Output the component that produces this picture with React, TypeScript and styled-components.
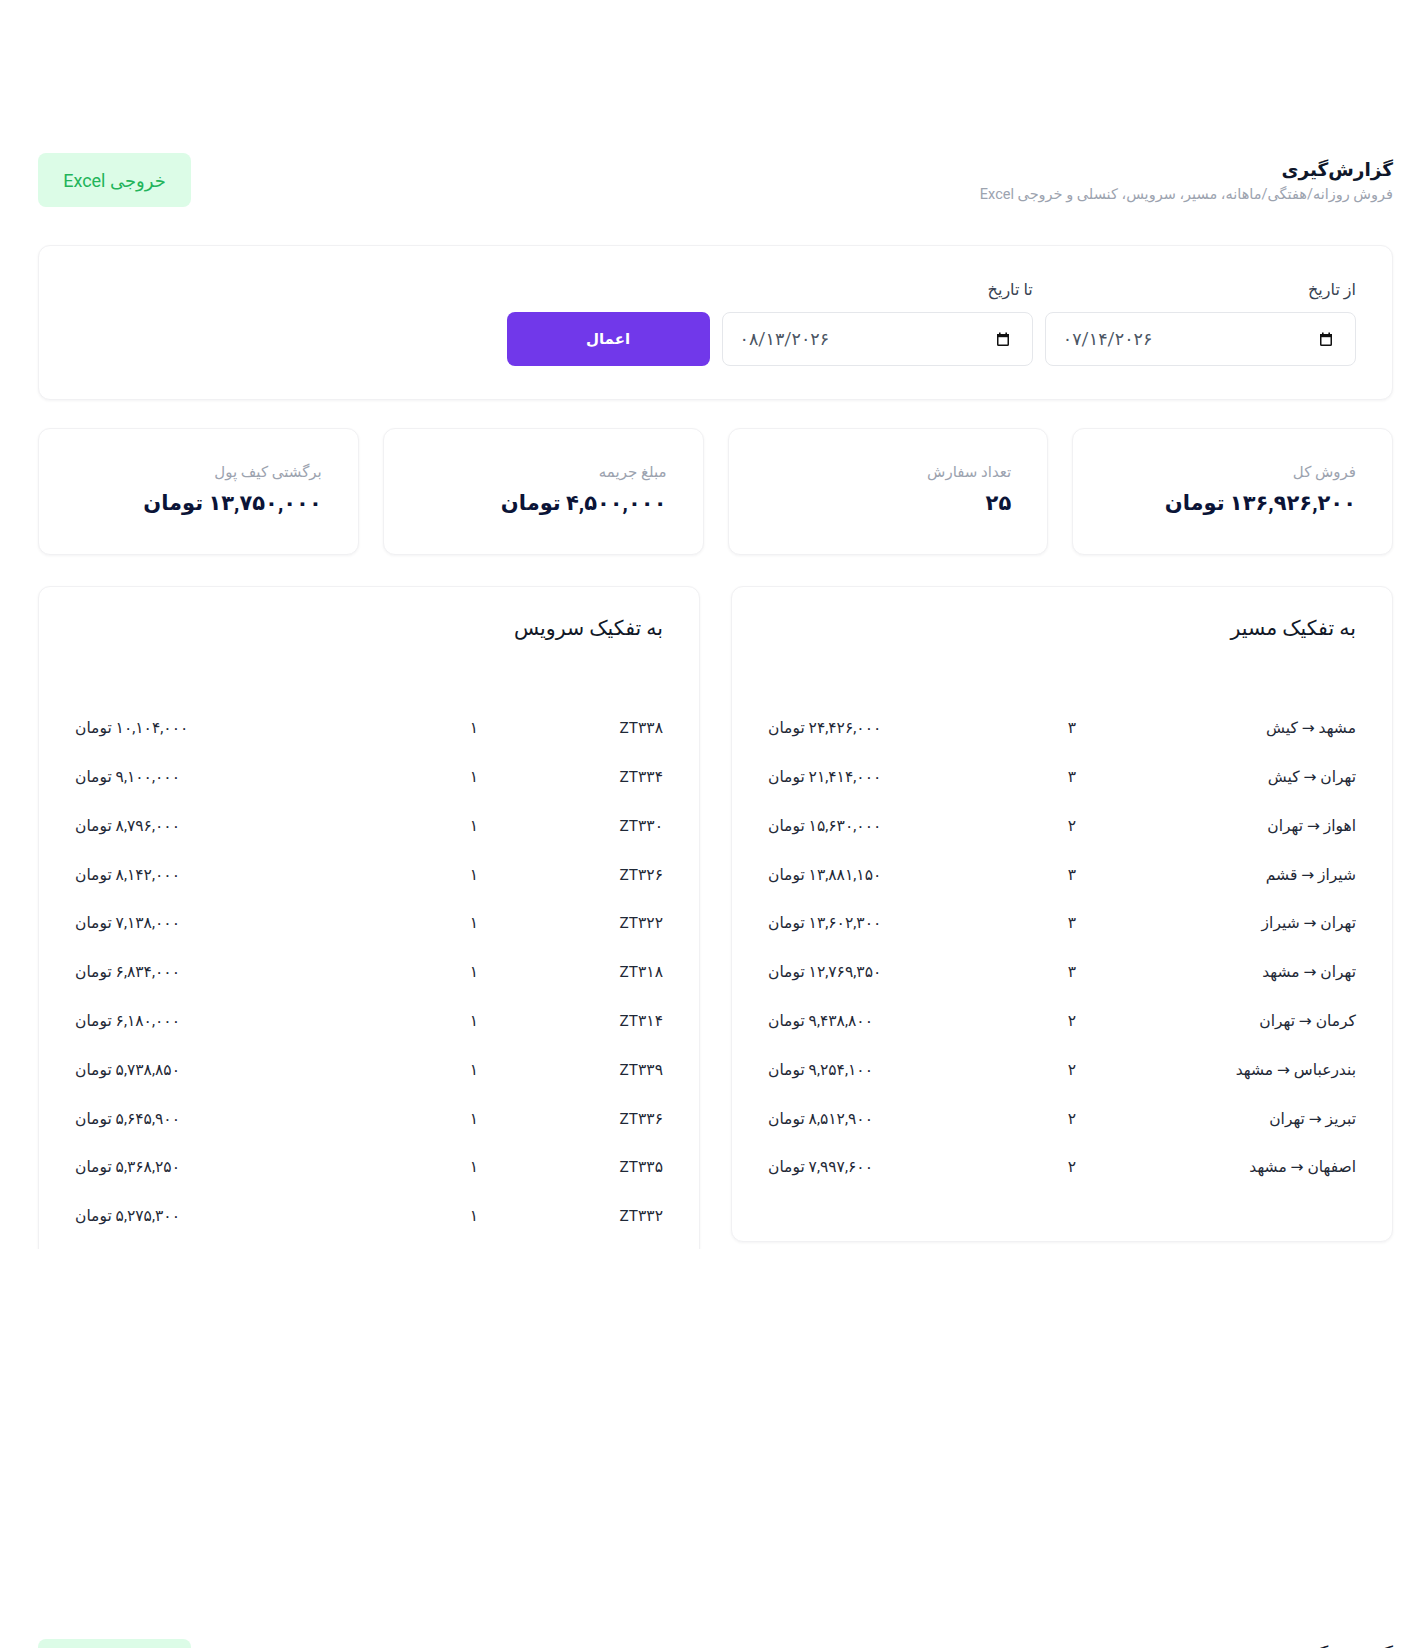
import React from "react";
import styled, { createGlobalStyle } from "styled-components";

const GlobalStyle = createGlobalStyle`
  * { box-sizing: border-box; }
  html, body {
    margin: 0;
    padding: 0;
    background: #fff;
  }
  body {
    font-family: Roboto, "DejaVu Sans", "Noto Sans", sans-serif;
    color: #111827;
  }
`;

const Frame = styled.div<{ $height: number }>`
  height: ${(p) => p.$height}px;
  overflow: hidden;
  direction: rtl;
`;

const Clip = styled.div`
  height: 1249px;
  overflow: hidden;
  padding: 153px 31px 0 38px;
  display: flex;
  flex-direction: column;
`;

const Header = styled.header`
  display: flex;
  justify-content: space-between;
  align-items: center;
  height: 54px;
`;

const TitleBlock = styled.div`
  display: flex;
  flex-direction: column;
`;

const Title = styled.h1`
  margin: 0;
  font-size: 18.5px;
  line-height: 30px;
  font-weight: 700;
  color: #0f172a;
`;

const Subtitle = styled.p`
  margin: 0;
  font-size: 14.5px;
  line-height: 20px;
  color: #9ca3af;
`;

const ExcelButton = styled.button`
  width: 153px;
  height: 54px;
  border: none;
  border-radius: 8px;
  background: #dcfce7;
  color: #22b45a;
  font-family: inherit;
  font-size: 18px;
  cursor: pointer;
`;

const Card = styled.section`
  background: #fff;
  border: 1px solid #f1f1f3;
  border-radius: 12px;
  box-shadow: 0 1px 3px rgba(15, 23, 42, 0.05);
`;

const FilterCard = styled(Card)`
  margin-top: 38px;
  padding: 33px 36px 33px;
  display: grid;
  grid-template-columns: repeat(4, 1fr);
  column-gap: 12px;
  align-items: end;
`;

const Field = styled.label`
  display: flex;
  flex-direction: column;
  gap: 11px;
`;

const FieldLabel = styled.span`
  font-size: 16px;
  line-height: 22px;
  color: #374151;
`;

const DateBox = styled.div`
  direction: ltr;
  height: 54px;
  border: 1px solid #e5e7eb;
  border-radius: 8px;
  display: flex;
  align-items: center;
  justify-content: space-between;
  padding: 0 22px 0 17px;
  font-size: 17.5px;
  color: #4b5563;
  background: #fff;
`;

const ApplyButton = styled.button`
  justify-self: start;
  width: 203px;
  height: 54px;
  border: none;
  border-radius: 8px;
  background: #7138ea;
  color: #fff;
  font-family: inherit;
  font-size: 15px;
  font-weight: 600;
  cursor: pointer;
`;

const StatsGrid = styled.div`
  margin-top: 28px;
  display: grid;
  grid-template-columns: repeat(4, 1fr);
  gap: 24px;
`;

const StatCard = styled(Card)`
  height: 127px;
  padding: 32px 36px 0;
  display: flex;
  flex-direction: column;
  gap: 2px;
`;

const StatLabel = styled.span`
  font-size: 15px;
  line-height: 22px;
  color: #9ca3af;
`;

const StatValue = styled.span`
  font-size: 21px;
  line-height: 36px;
  font-weight: 800;
  color: #0b1437;
`;

const Breakdown = styled.div`
  margin-top: 31px;
  display: grid;
  grid-template-columns: 1fr 1fr;
  gap: 31px;
  align-items: start;
`;

const TableCard = styled(Card)`
  padding: 26px 36px 49px;
`;

const TableTitle = styled.h2`
  margin: 0 0 12px;
  font-size: 20.5px;
  line-height: 30px;
  font-weight: 500;
  color: #111827;
`;

const Row = styled.div<{ $nameWidth: number }>`
  display: grid;
  grid-template-columns: ${(p) => p.$nameWidth}px 1fr auto;
  align-items: center;
  height: 48.8px;
  font-size: 15.5px;
  color: #1f2937;
`;

const Cell = styled.span<{ $end?: boolean }>`
  text-align: ${(p) => (p.$end ? "left" : "right")};
`;

const CalendarIcon = () => (
  <svg width="14" height="16" viewBox="0 0 14 16" aria-hidden>
    <rect x="1.75" y="3.75" width="10.5" height="10.5" rx="0.8" fill="none" stroke="#111" strokeWidth="1.5" />
    <rect x="1" y="3" width="12" height="3.2" fill="#111" />
    <rect x="3" y="1.5" width="1.6" height="2.5" fill="#111" />
    <rect x="9.4" y="1.5" width="1.6" height="2.5" fill="#111" />
  </svg>
);

const stats = [
  { label: "فروش کل", value: "۱۳۶,۹۲۶,۲۰۰ تومان" },
  { label: "تعداد سفارش", value: "۲۵" },
  { label: "مبلغ جریمه", value: "۴,۵۰۰,۰۰۰ تومان" },
  { label: "برگشتی کیف پول", value: "۱۳,۷۵۰,۰۰۰ تومان" },
];

const routes: [string, string, string][] = [
  ["مشهد → کیش", "۳", "۲۴,۴۲۶,۰۰۰ تومان"],
  ["تهران → کیش", "۳", "۲۱,۴۱۴,۰۰۰ تومان"],
  ["اهواز → تهران", "۲", "۱۵,۶۳۰,۰۰۰ تومان"],
  ["شیراز → قشم", "۳", "۱۳,۸۸۱,۱۵۰ تومان"],
  ["تهران → شیراز", "۳", "۱۳,۶۰۲,۳۰۰ تومان"],
  ["تهران → مشهد", "۳", "۱۲,۷۶۹,۳۵۰ تومان"],
  ["کرمان → تهران", "۲", "۹,۴۳۸,۸۰۰ تومان"],
  ["بندرعباس → مشهد", "۲", "۹,۲۵۴,۱۰۰ تومان"],
  ["تبریز → تهران", "۲", "۸,۵۱۲,۹۰۰ تومان"],
  ["اصفهان → مشهد", "۲", "۷,۹۹۷,۶۰۰ تومان"],
];

const services: [string, string, string][] = [
  ["ZT۳۳۸", "۱", "۱۰,۱۰۴,۰۰۰ تومان"],
  ["ZT۳۳۴", "۱", "۹,۱۰۰,۰۰۰ تومان"],
  ["ZT۳۳۰", "۱", "۸,۷۹۶,۰۰۰ تومان"],
  ["ZT۳۲۶", "۱", "۸,۱۴۲,۰۰۰ تومان"],
  ["ZT۳۲۲", "۱", "۷,۱۳۸,۰۰۰ تومان"],
  ["ZT۳۱۸", "۱", "۶,۸۳۴,۰۰۰ تومان"],
  ["ZT۳۱۴", "۱", "۶,۱۸۰,۰۰۰ تومان"],
  ["ZT۳۳۹", "۱", "۵,۷۳۸,۸۵۰ تومان"],
  ["ZT۳۳۶", "۱", "۵,۶۴۵,۹۰۰ تومان"],
  ["ZT۳۳۵", "۱", "۵,۳۶۸,۲۵۰ تومان"],
  ["ZT۳۳۲", "۱", "۵,۲۷۵,۳۰۰ تومان"],
];

const BreakdownTable: React.FC<{
  title: string;
  rows: [string, string, string][];
  nameWidth: number;
}> = ({ title, rows, nameWidth }) => (
  <TableCard>
    <TableTitle>{title}</TableTitle>
    <Row $nameWidth={nameWidth} />
    {rows.map(([name, count, amount]) => (
      <Row key={name} $nameWidth={nameWidth}>
        <Cell>{name}</Cell>
        <Cell>{count}</Cell>
        <Cell $end>{amount}</Cell>
      </Row>
    ))}
  </TableCard>
);

const ReportBody = () => (
  <>
    <FilterCard>
      <Field>
        <FieldLabel>از تاریخ</FieldLabel>
        <DateBox>
          <span>۰۷/۱۴/۲۰۲۶</span>
          <CalendarIcon />
        </DateBox>
      </Field>
      <Field>
        <FieldLabel>تا تاریخ</FieldLabel>
        <DateBox>
          <span>۰۸/۱۳/۲۰۲۶</span>
          <CalendarIcon />
        </DateBox>
      </Field>
      <ApplyButton>اعمال</ApplyButton>
    </FilterCard>

    <StatsGrid>
      {stats.map((s) => (
        <StatCard key={s.label}>
          <StatLabel>{s.label}</StatLabel>
          <StatValue>{s.value}</StatValue>
        </StatCard>
      ))}
    </StatsGrid>

    <Breakdown>
      <BreakdownTable title="به تفکیک مسیر" rows={routes} nameWidth={280} />
      <BreakdownTable title="به تفکیک سرویس" rows={services} nameWidth={185} />
    </Breakdown>
  </>
);

// the page repeats below; only its header is still inside the window
const ReportPage: React.FC<{ height: number; headerOnly?: boolean }> = ({ height, headerOnly }) => (
  <Frame $height={height}>
    <Clip>
      <Header>
        <TitleBlock>
          <Title>گزارش‌گیری</Title>
          <Subtitle>فروش روزانه/هفتگی/ماهانه، مسیر، سرویس، کنسلی و خروجی Excel</Subtitle>
        </TitleBlock>
        <ExcelButton>خروجی Excel</ExcelButton>
      </Header>
      {!headerOnly && <ReportBody />}
    </Clip>
  </Frame>
);

export default function App() {
  return (
    <>
      <GlobalStyle />
      <ReportPage height={1486} />
      <ReportPage height={162} headerOnly />
    </>
  );
}
